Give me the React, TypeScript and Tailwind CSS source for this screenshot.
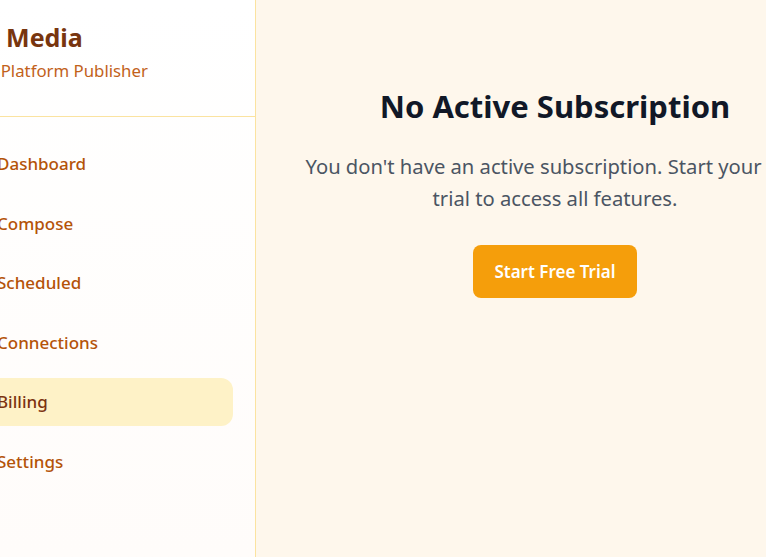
import { LayoutDashboard, PenSquare, CalendarClock, Link2, CreditCard, Settings } from "lucide-react"

const nav = [
  { label: "Dashboard", icon: LayoutDashboard },
  { label: "Compose", icon: PenSquare },
  { label: "Scheduled", icon: CalendarClock },
  { label: "Connections", icon: Link2 },
  { label: "Billing", icon: CreditCard, active: true },
  { label: "Settings", icon: Settings },
]

export default function App() {
  return (
    <div
      className="flex h-[557px] w-[766px] overflow-hidden bg-[#fef7ec]"
      style={{ fontFamily: '"Segoe UI", "Noto Sans", "Open Sans", sans-serif' }}
    >
      <aside className="-ml-[73px] flex w-[329px] shrink-0 flex-col border-r border-[#fbe3a0] bg-gradient-to-b from-white to-[#fffcfa]">
        <div className="h-[117px] border-b border-[#fbe3a0] pl-[29px] pt-[21px]">
          <h1 className="text-[25px] leading-8 font-bold text-[#78350f]">Sky Media</h1>
          <p className="mt-[5px] text-[16.8px] text-[#c2611a]">Multi Platform Publisher</p>
        </div>
        <nav className="flex flex-col gap-[11.5px] px-[22px] pt-[23px]">
          {nav.map(({ label, icon: Icon, active }) => (
            <div
              key={label}
              className={`flex h-12 items-center gap-3 rounded-xl px-4 text-[17px] font-medium ${
                active ? "bg-[#fef2c7] text-[#7c3210]" : "text-[#b45309]"
              }`}
            >
              <Icon className="h-5 w-5" />
              <span>{label}</span>
            </div>
          ))}
        </nav>
      </aside>

      <main className="w-[598px] shrink-0">
        <div className="flex flex-col items-center pt-[88px] text-center">
          <h2 className="text-[31px] leading-9 font-bold text-[#111827]">No Active Subscription</h2>
          <p className="mt-[26px] max-w-lg text-[20.2px] leading-[32px] text-[#4b5563]">
            You don't have an active subscription. Start your free trial to access all features.
          </p>
          <button className="mt-[31px] h-[53px] rounded-lg bg-[#f59e0b] px-[21px] text-[17px] font-semibold text-white">
            Start Free Trial
          </button>
        </div>
      </main>
    </div>
  )
}
